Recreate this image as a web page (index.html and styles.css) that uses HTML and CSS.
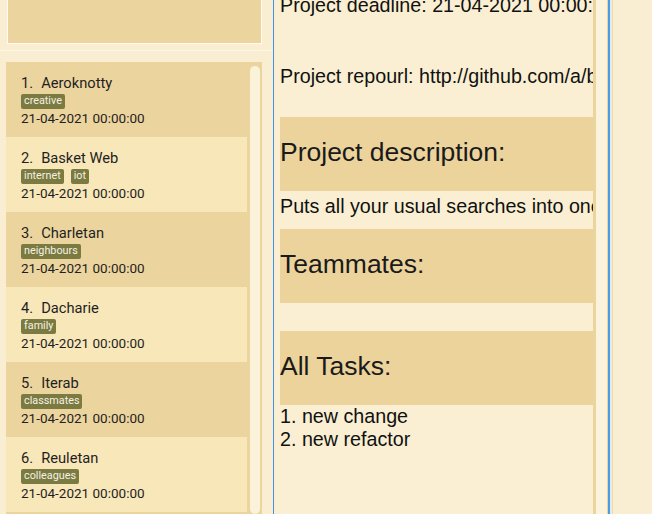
FILE: index.html
```html
<!DOCTYPE html>
<html lang="en">
<head>
<meta charset="utf-8">
<title>Projects</title>
<link rel="stylesheet" href="styles.css">
</head>
<body>
<div class="app">
  <aside class="left">
    <div class="top-box"></div>
    <div class="sep"></div>
    <div class="list">
      <div class="items">
        <div class="item odd">
          <div class="name"><span class="idx">1.</span>Aeroknotty</div>
          <div class="tags"><span class="tag">creative</span></div>
          <div class="date">21-04-2021 00:00:00</div>
        </div>
        <div class="item even">
          <div class="name"><span class="idx">2.</span>Basket Web</div>
          <div class="tags"><span class="tag">internet</span><span class="tag">iot</span></div>
          <div class="date">21-04-2021 00:00:00</div>
        </div>
        <div class="item odd">
          <div class="name"><span class="idx">3.</span>Charletan</div>
          <div class="tags"><span class="tag">neighbours</span></div>
          <div class="date">21-04-2021 00:00:00</div>
        </div>
        <div class="item even">
          <div class="name"><span class="idx">4.</span>Dacharie</div>
          <div class="tags"><span class="tag">family</span></div>
          <div class="date">21-04-2021 00:00:00</div>
        </div>
        <div class="item odd">
          <div class="name"><span class="idx">5.</span>Iterab</div>
          <div class="tags"><span class="tag">classmates</span></div>
          <div class="date">21-04-2021 00:00:00</div>
        </div>
        <div class="item even">
          <div class="name"><span class="idx">6.</span>Reuletan</div>
          <div class="tags"><span class="tag">colleagues</span></div>
          <div class="date">21-04-2021 00:00:00</div>
        </div>
      </div>
      <div class="scrollbar"><div class="thumb"></div></div>
    </div>
  </aside>
  <section class="detail">
    <div class="content">
      <p class="line deadline">Project deadline: 21-04-2021 00:00:00</p>
      <p class="line repo">Project repourl: http://github.com/a/basketweb</p>
      <h2 class="header first">Project description:</h2>
      <p class="line desc">Puts all your usual searches into one page</p>
      <h2 class="header">Teammates:</h2>
      <div class="teammates"></div>
      <h2 class="header">All Tasks:</h2>
      <ol class="tasks">
        <li>1. new change</li>
        <li>2. new refactor</li>
      </ol>
    </div>
    <div class="vscroll"></div>
  </section>
  <div class="edge"></div>
  <div class="edge-tan"></div>
  <div class="filler"></div>
</div>
</body>
</html>
```

FILE: styles.css
```css
* { box-sizing: border-box; }

html, body {
  margin: 0;
  padding: 0;
  background: #f9eed1;
  overflow: hidden;
}

.app {
  display: flex;
  width: 652px;
  height: 514px;
  overflow: hidden;
  background: #f9eed1;
}

/* ---------- left column ---------- */
.left {
  width: 273px;
  flex: none;
  display: flex;
  flex-direction: column;
  padding-left: 6px;
}

.top-box {
  margin-left: 1px;
  width: 255px;
  height: 44px;
  flex: none;
  background: #ecd49e;
  border: 1px solid #fffbf2;
  border-top: none;
}

.sep {
  margin-top: 6px;
  height: 1px;
  margin-left: -6px;
  width: 280px;
  background: #fdf6e4;
  flex: none;
}

.list {
  margin-top: 11px;
  width: 256px;
  flex: 1;
  display: flex;
  background: #ecd49e;
  overflow: hidden;
}

.items {
  width: 241px;
  flex: none;
  display: flex;
  flex-direction: column;
}

.item {
  height: 75px;
  flex: none;
  padding: 12px 0 0 15px;
  font-family: Roboto, "Liberation Sans", sans-serif;
  color: #1f1f1f;
}

.item.odd { background: #ecd49e; }
.item.even { background: #f8e7b9; }

.name {
  font-size: 14.7px;
  line-height: 18px;
  white-space: nowrap;
}

.idx {
  display: inline-block;
  margin-right: 8px;
}

.tags {
  margin-top: 2px;
  display: flex;
  gap: 7px;
  height: 14.5px;
}

.tag {
  display: inline-block;
  height: 14.5px;
  line-height: 14.5px;
  padding: 0 3px;
  font-size: 10.8px;
  color: #f4f1e4;
  background: #7b7a40;
  border-radius: 2px;
}

.date {
  margin-top: 2px;
  font-size: 13.5px;
  line-height: 15px;
  white-space: nowrap;
}

.scrollbar {
  margin-left: 3px;
  width: 10px;
  flex: none;
  padding-top: 4px;
  display: flex;
  flex-direction: column;
}

.thumb {
  flex: 1;
  background: #fbf2da;
  border-radius: 5px;
}

/* ---------- right detail ---------- */
.detail {
  width: 337px;
  flex: none;
  display: flex;
  border-left: 1px solid #3f93e6;
  border-right: 2px solid #4b9be6;
  background: #faefd2;
}

.content {
  flex: 1;
  min-width: 0;
  padding-left: 6px;
  overflow: hidden;
  font-family: "Liberation Sans", Arial, sans-serif;
  color: #111111;
}

.line {
  margin: 0;
  font-size: 19.7px;
  line-height: 23px;
  white-space: nowrap;
  overflow: hidden;
}

.deadline { margin-top: -6.5px; }
.repo { margin-top: 48px; }

.header {
  margin: 0;
  padding: 20px 0 24px;
  font-size: 26.5px;
  line-height: 30px;
  font-weight: normal;
  color: #1a1a1a;
  background: #ecd39c;
  white-space: nowrap;
}

.header.first { margin-top: 29.5px; }

.desc { padding: 4px 0 11px; }

.teammates { height: 28px; }

.tasks {
  margin: 0;
  padding: 0;
  list-style: none;
  font-size: 19.7px;
  line-height: 23px;
}

.vscroll {
  width: 15px;
  flex: none;
  background: #fbf3dc;
  border-left: 3px solid #ecd49e;
  border-right: 1px solid #ecd49e;
}

.edge {
  width: 2px;
  flex: none;
  background: #e7ebe8;
}

.edge-tan {
  width: 1px;
  flex: none;
  background: #efdcae;
}

.filler {
  flex: 1;
  background: #f9eed1;
}
```
